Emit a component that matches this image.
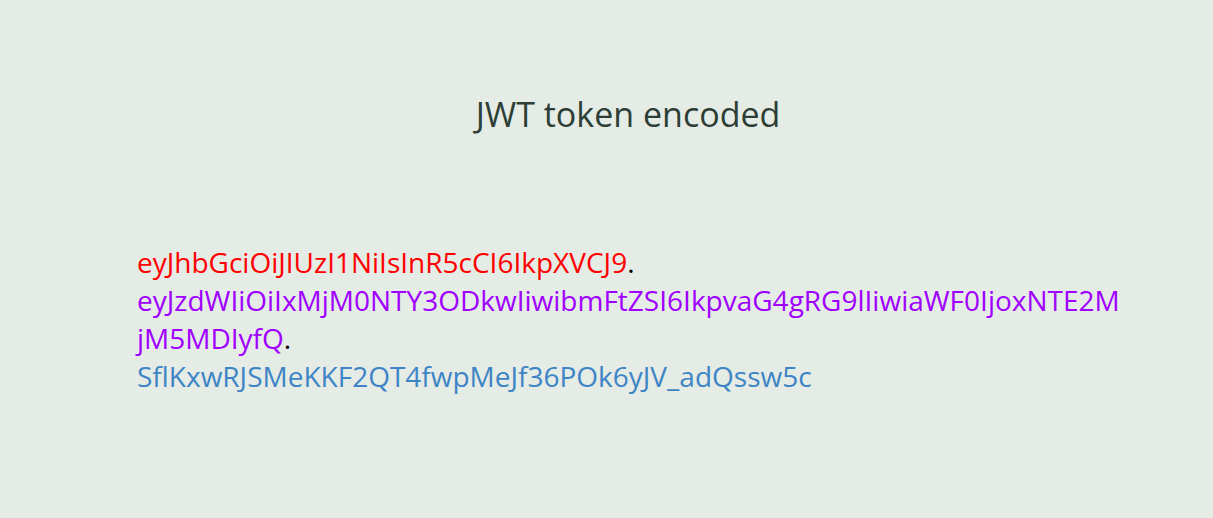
import React, { FC } from "react";

const header = "eyJhbGciOiJIUzI1NiIsInR5cCI6IkpXVCJ9";
const payload =
  "eyJzdWIiOiIxMjM0NTY3ODkwIiwibmFtZSI6IkpvaG4gRG9lIiwiaWF0IjoxNTE2MjM5MDIyfQ";
const signature = "SflKxwRJSMeKKF2QT4fwpMeJf36POk6yJV_adQssw5c";

const App: FC = () => {
  return (
    <div
      className="min-h-screen h-[518px] bg-[#e5ebe5]"
      style={{ fontFamily: '"Open Sans", "Noto Sans", sans-serif' }}
    >
      <div className="ml-[137px] w-[982px] pt-[92px]">
        <h1 className="text-center text-[34px] leading-[44px] text-[#2c3e35]">
          JWT token encoded
        </h1>

        {/* encoded token */}
        <p className="mt-[107px] w-[985px] text-[28px] leading-[38px] break-all text-black">
          <span className="text-[#ff0000]">{header}</span>.
          <br />
          <span className="text-[#a000ff]">{payload}</span>.
          <br />
          <span className="text-[#3d85c6]">{signature}</span>
        </p>
      </div>
    </div>
  );
};

export default App;
